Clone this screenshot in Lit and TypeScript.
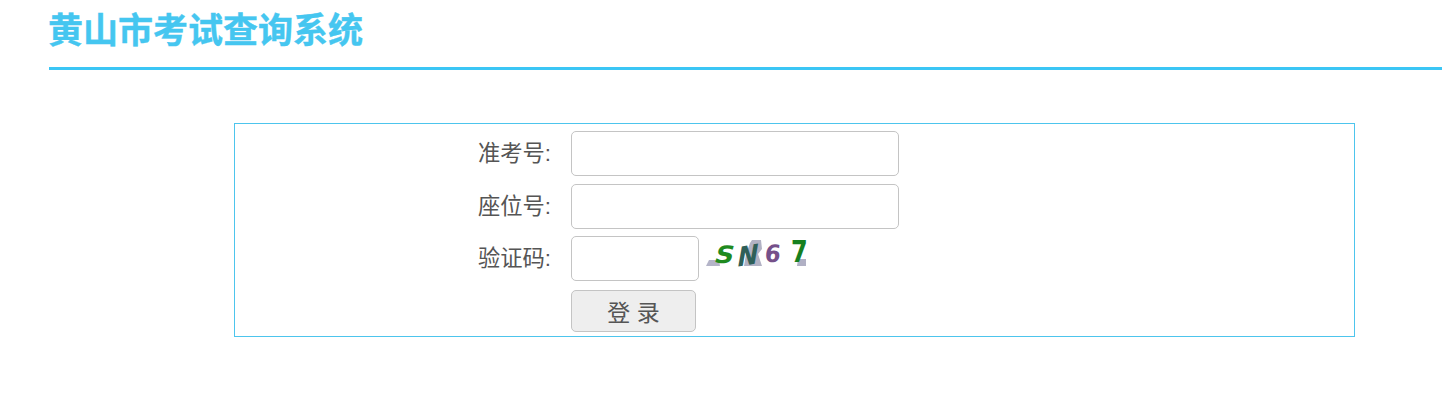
import { LitElement, html, css } from "lit";
import { customElement } from "lit/decorators.js";

@customElement("app-root")
export class AppRoot extends LitElement {
  static styles = css`
    :host {
      display: block;
      height: 416px;
      background: #fff;
      font-family: "Liberation Sans", "Noto Sans CJK SC", sans-serif;
      color: #555;
      overflow: hidden;
    }
    .head {
      margin-left: 49px;
      height: 67px;
      border-bottom: 3px solid #3bc6f5;
    }
    h1 {
      margin: 0 0 0 -1px;
      padding-top: 8px;
      font-size: 35px;
      line-height: 45px;
      font-weight: bold;
      color: #45c6f0;
      -webkit-text-stroke: 0.4px #45c6f0;
    }
    .box {
      margin: 53px 0 0 234px;
      width: 1121px;
      height: 214px;
      box-sizing: border-box;
      border: 1px solid #4dc5ed;
      padding-top: 7px;
      display: grid;
      grid-template-columns: 316px 1fr;
      grid-template-rows: 45px 45px 45px 42px;
      column-gap: 20px;
      row-gap: 8px;
    }
    .label {
      grid-column: 1;
      text-align: right;
      font-size: 22.3px;
      line-height: 45px;
      white-space: nowrap;
    }
    .field {
      grid-column: 2;
      display: flex;
      align-items: flex-start;
      gap: 7px;
    }
    input {
      display: block;
      width: 328px;
      height: 45px;
      box-sizing: border-box;
      border: 1px solid #c4c4c4;
      border-radius: 5px;
      background: #fff;
      padding: 0 8px;
    }
    input.short {
      width: 128px;
    }
    .third {
      margin-top: -1px;
    }
    .captcha {
      display: block;
      width: 100px;
      height: 32px;
      margin-top: 4px;
      overflow: visible;
    }
    .captcha text {
      font-family: "DejaVu Sans", sans-serif;
      font-weight: bold;
      font-size: 24px;
    }
    button {
      width: 125px;
      height: 42px;
      border: 1px solid #c4c4c4;
      border-radius: 5px;
      background: #eee;
      color: #555;
      font: inherit;
      font-size: 23px;
      padding: 0;
    }
  `;

  render() {
    return html`
      <div class="head"><h1>黄山市考试查询系统</h1></div>
      <div class="box">
        <div class="label">准考号:</div>
        <div class="field"><input type="text" /></div>
        <div class="label">座位号:</div>
        <div class="field"><input type="text" /></div>
        <div class="label third">验证码:</div>
        <div class="field third">
          <input class="short" type="text" />
          <svg class="captcha" viewBox="0 0 100 32">
            <polygon points="0,26 3,20 13,20 14,26" fill="#b4b4c8" />
            <polygon points="44,3 46,0 55,0 56,9 52,14 56,26 38,26 40,14" fill="#b2b2c4" />
            <polygon points="91,26 92,19 100,19 100,26" fill="#b0b0c4" />
            <text transform="translate(7 23) skewX(-16) scale(1.1 1)" fill="#1f8a1f">S</text>
            <text transform="translate(30 27) rotate(-10) skewX(-20) scale(1.05 1.1)" fill="#2f5f58">N</text>
            <text transform="translate(58 22) skewX(-6) scale(0.95 1)" fill="#75508a">6</text>
            <text transform="translate(85 22) scale(1 1.25)" fill="#16801f">7</text>
          </svg>
        </div>
        <div class="field"><button>登 录</button></div>
      </div>
    `;
  }
}
